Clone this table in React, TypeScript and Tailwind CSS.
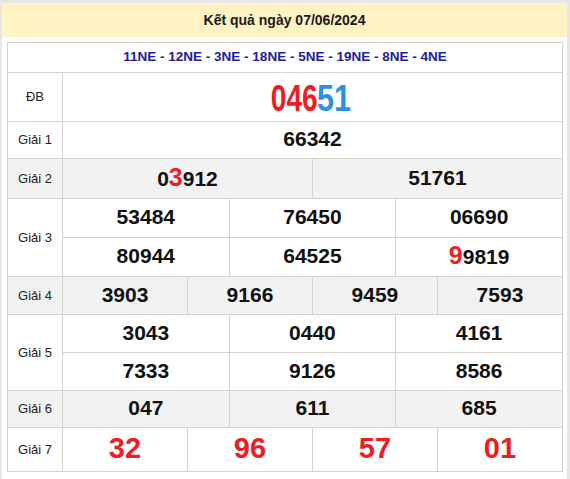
import React from 'react';

type Cell = { value: string; hi?: number };

const rows: { label: string; cols: number; lines: Cell[][]; alt?: boolean; h: number }[] = [
  { label: 'Giải 1', cols: 1, lines: [[{ value: '66342' }]], h: 37 },
  { label: 'Giải 2', cols: 2, lines: [[{ value: '03912', hi: 1 }, { value: '51761' }]], alt: true, h: 40 },
  {
    label: 'Giải 3',
    cols: 3,
    lines: [
      [{ value: '53484' }, { value: '76450' }, { value: '06690' }],
      [{ value: '80944' }, { value: '64525' }, { value: '99819', hi: 0 }],
    ],
    h: 39,
  },
  { label: 'Giải 4', cols: 4, lines: [[{ value: '3903' }, { value: '9166' }, { value: '9459' }, { value: '7593' }]], alt: true, h: 38 },
  {
    label: 'Giải 5',
    cols: 3,
    lines: [
      [{ value: '3043' }, { value: '0440' }, { value: '4161' }],
      [{ value: '7333' }, { value: '9126' }, { value: '8586' }],
    ],
    h: 38,
  },
  { label: 'Giải 6', cols: 3, lines: [[{ value: '047' }, { value: '611' }, { value: '685' }]], alt: true, h: 37 },
];

const spanFor = (cols: number) => (cols === 1 ? 12 : cols === 2 ? 6 : cols === 3 ? 4 : 3);

const Num: React.FC<{ cell: Cell }> = ({ cell }) => {
  if (cell.hi === undefined) return <>{cell.value}</>;
  const i = cell.hi;
  return (
    <>
      {cell.value.slice(0, i)}
      <span className="text-[25px] text-[#ee1c25]">{cell.value[i]}</span>
      {cell.value.slice(i + 1)}
    </>
  );
};

const App: React.FC = () => {
  return (
    <div className="w-[570px] h-[479px] bg-[#e6e6e6] pt-[3px] pl-[2px] pr-[3px] font-['Liberation_Sans',Arial,sans-serif]">
      <div className="h-[34px] bg-[#fff3c4] flex items-center justify-center text-[14px] font-bold text-[#1a1a1a]">
        Kết quả ngày 07/06/2024
      </div>
      <div className="bg-white h-[442px] pt-[5px] px-[5px]">
        <table className="table-fixed border-collapse w-[556px] border border-[#d6d2cc]">
          <colgroup>
            <col className="w-[55px]" />
            {Array.from({ length: 12 }).map((_, i) => (
              <col key={i} />
            ))}
          </colgroup>
          <tbody>
            <tr className="h-[30px]">
              <td colSpan={13} className="border border-[#d6d2cc] text-center text-[13.5px] font-bold text-[#1c1c9c] p-0">
                11NE - 12NE - 3NE - 18NE - 5NE - 19NE - 8NE - 4NE
              </td>
            </tr>
            <tr className="h-[49px]">
              <td className="border border-[#d6d2cc] text-center text-[13px] text-[#222] p-0">ĐB</td>
              <td colSpan={12} className="border border-[#d6d2cc] text-center font-bold p-0 pt-[2px] pr-[12px] leading-none whitespace-nowrap">
                <span className="inline-block text-[37px] text-[#ee1c25] scale-x-[0.76] origin-right">046</span>
                <span className="inline-block text-[36px] text-[#2e8ee0] scale-x-[0.85] origin-left">51</span>
              </td>
            </tr>
            {rows.map((row) =>
              row.lines.map((line, li) => (
                <tr key={row.label + li} className={row.alt ? 'bg-[#f2f2f2]' : ''} style={{ height: row.h }}>
                  {li === 0 && (
                    <td
                      rowSpan={row.lines.length}
                      className="border border-[#d6d2cc] text-center text-[13px] text-[#222] p-0"
                    >
                      {row.label}
                    </td>
                  )}
                  {line.map((cell, ci) => (
                    <td
                      key={ci}
                      colSpan={spanFor(row.cols)}
                      className="border border-[#d6d2cc] text-center text-[21px] font-bold text-[#111] p-0 pb-[3px] leading-none"
                    >
                      <Num cell={cell} />
                    </td>
                  ))}
                </tr>
              ))
            )}
            <tr className="h-[44px]">
              <td className="border border-[#d6d2cc] text-center text-[13px] text-[#222] p-0">Giải 7</td>
              {['32', '96', '57', '01'].map((v) => (
                <td key={v} colSpan={3} className="border border-[#d6d2cc] text-center text-[29px] font-bold text-[#ee1c25] p-0 pb-[2px] leading-none">
                  {v}
                </td>
              ))}
            </tr>
          </tbody>
        </table>
      </div>
    </div>
  );
};

export default App;
